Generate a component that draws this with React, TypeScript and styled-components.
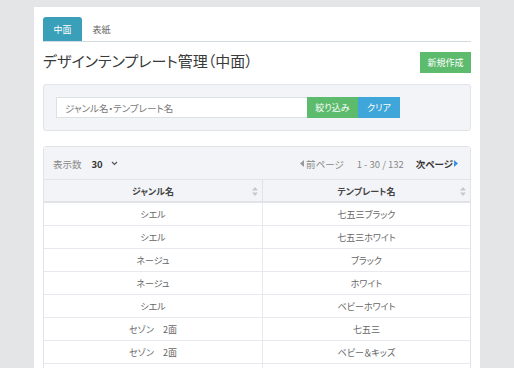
import React from 'react'
import styled, { createGlobalStyle } from 'styled-components'

const GlobalStyle = createGlobalStyle`
  html, body {
    margin: 0;
    padding: 0;
    background: #e4e5e7;
  }
  body {
    font-family: "Noto Sans CJK JP", "Noto Sans", sans-serif;
    font-feature-settings: "palt";
    color: #333;
  }
`

const rows = [
  { genre: 'シエル', name: '七五三ブラック' },
  { genre: 'シエル', name: '七五三ホワイト' },
  { genre: 'ネージュ', name: 'ブラック' },
  { genre: 'ネージュ', name: 'ホワイト' },
  { genre: 'シエル', name: 'ベビーホワイト' },
  { genre: 'セゾン　2面', name: '七五三' },
  { genre: 'セゾン　2面', name: 'ベビー＆キッズ' },
  { genre: 'シエル', name: 'ベビーホワイト' },
]

const Page = styled.div`
  height: 368px;
  overflow: hidden;
  padding-left: 34px;
  padding-top: 7px;
  box-sizing: border-box;
`

const Panel = styled.div`
  width: 446px;
  min-height: 400px;
  background: #fff;
  padding: 10px 9px 0;
  box-sizing: border-box;
`

const Tabs = styled.div`
  display: flex;
  border-bottom: 1px solid #d5d9e0;
  height: 24px;
`

const Tab = styled.div<{ $active?: boolean }>`
  width: 39px;
  height: 24px;
  display: flex;
  align-items: center;
  justify-content: center;
  font-size: 9px;
  border-radius: 3px 3px 0 0;
  background: ${(p) => (p.$active ? '#3a9fb8' : 'transparent')};
  color: ${(p) => (p.$active ? '#fff' : '#666')};
`

const TitleRow = styled.div`
  display: flex;
  justify-content: space-between;
  align-items: center;
  margin-top: 10px;
  height: 21px;
`

const Title = styled.h1`
  margin: 0;
  font-size: 15px;
  font-weight: 400;
  color: #3a3a3a;
  position: relative;
  top: -2px;
`

const Button = styled.button<{ $color: string; $width: number }>`
  border: none;
  background: ${(p) => p.$color};
  color: #fff;
  font-family: inherit;
  font-feature-settings: "palt";
  font-size: 9px;
  width: ${(p) => p.$width}px;
  height: 21px;
  padding: 0;
  display: flex;
  align-items: center;
  justify-content: center;
`

const SearchBox = styled.div`
  margin-top: 11px;
  background: #f3f4f7;
  border: 1px solid #e1e3e8;
  border-radius: 3px;
  padding: 12px 12px;
  display: flex;
`

const Input = styled.input`
  width: 251px;
  height: 21px;
  box-sizing: border-box;
  border: 1px solid #dde0e5;
  border-right: none;
  padding: 0 8px;
  font-family: inherit;
  font-feature-settings: "palt";
  font-size: 9.5px;
  color: #333;
  outline: none;
  &::placeholder {
    color: #777;
  }
`

const TableCard = styled.div`
  margin-top: 15px;
  border: 1px solid #e1e3e8;
  border-radius: 3px 3px 0 0;
  background: #fff;
`

const Toolbar = styled.div`
  height: 32px;
  background: #f3f4f7;
  display: flex;
  align-items: center;
  justify-content: space-between;
  padding: 1px 12px 0 9px;
  box-sizing: border-box;
  font-size: 9.5px;
`

const Group = styled.div`
  display: flex;
  align-items: center;
`

const Muted = styled.span`
  color: #888;
`

const Strong = styled.span`
  font-weight: 700;
  color: #333;
`

const Table = styled.table`
  width: 100%;
  border-collapse: collapse;
  font-size: 9px;
`

const Th = styled.th`
  position: relative;
  height: 20px;
  background: #f3f4f7;
  font-weight: 700;
  color: #444;
  border-top: 1px solid #e1e3e8;
  border-bottom: 2px solid #e1e3e8;
  padding: 1px 0 0;
  & + & {
    border-left: 1px solid #e1e3e8;
  }
`

const SortIcon = styled.svg`
  position: absolute;
  right: 4px;
  top: 7px;
`

const Td = styled.td`
  height: 21px;
  text-align: center;
  color: #666;
  border-bottom: 1px solid #e8e9ee;
  padding: 1px 0 0;
  & + & {
    border-left: 1px solid #e8e9ee;
  }
`

const Sort = () => (
  <SortIcon width="6" height="9" viewBox="0 0 6 9">
    <path d="M3 0 L6 3.5 H0 Z M3 9 L6 5.5 H0 Z" fill="#c5c8d0" />
  </SortIcon>
)

export default function App() {
  return (
    <>
      <GlobalStyle />
      <Page>
        <Panel>
          <Tabs>
            <Tab $active>中面</Tab>
            <Tab>表紙</Tab>
          </Tabs>
          <TitleRow>
            <Title>デザインテンプレート管理（中面）</Title>
            <Button $color="#5cbb6d" $width={51}>新規作成</Button>
          </TitleRow>
          <SearchBox>
            <Input placeholder="ジャンル名・テンプレート名" />
            <Button $color="#5cbb6d" $width={51}>絞り込み</Button>
            <Button $color="#3ea6d8" $width={42}>クリア</Button>
          </SearchBox>
          <TableCard>
            <Toolbar>
              <Group>
                <Muted>表示数</Muted>
                <Strong style={{ marginLeft: 10 }}>30</Strong>
                <svg width="7" height="5" viewBox="0 0 7 5" style={{ marginLeft: 8 }}>
                  <path d="M1 1 L3.5 3.5 L6 1" stroke="#555" strokeWidth="1.2" fill="none" />
                </svg>
              </Group>
              <Group>
                <svg width="4" height="7" viewBox="0 0 4 7" style={{ marginRight: 2 }}>
                  <path d="M4 0 V7 L0 3.5 Z" fill="#999" />
                </svg>
                <Muted>前ページ</Muted>
                <Muted style={{ marginLeft: 13 }}>1 - 30 / 132</Muted>
                <Strong style={{ marginLeft: 12 }}>次ページ</Strong>
                <svg width="4" height="7" viewBox="0 0 4 7" style={{ marginLeft: 1 }}>
                  <path d="M0 0 V7 L4 3.5 Z" fill="#3e8fe0" />
                </svg>
              </Group>
            </Toolbar>
            <Table>
              <thead>
                <tr>
                  <Th style={{ width: '51.3%' }}>
                    ジャンル名
                    <Sort />
                  </Th>
                  <Th>
                    テンプレート名
                    <Sort />
                  </Th>
                </tr>
              </thead>
              <tbody>
                {rows.map((r, i) => (
                  <tr key={i}>
                    <Td>{r.genre}</Td>
                    <Td>{r.name}</Td>
                  </tr>
                ))}
              </tbody>
            </Table>
          </TableCard>
        </Panel>
      </Page>
    </>
  )
}
